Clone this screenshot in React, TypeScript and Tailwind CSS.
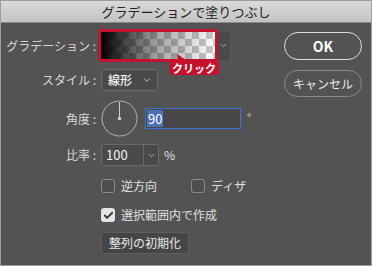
import { Check, ChevronDown } from 'lucide-react';

const font = { fontFamily: '"Noto Sans CJK JP", "Noto Sans", sans-serif' };

function Label({ text }: { text: string }) {
  return (
    <div className="w-[100px] shrink-0 pr-[5px] text-right text-[12px] text-[#d8d8d8]">
      {text}
    </div>
  );
}

function Checkbox({ checked, label }: { checked?: boolean; label: string }) {
  return (
    <div className="flex items-center gap-[6px] leading-[16px]">
      {checked ? (
        <div className="flex h-[14px] w-[14px] items-center justify-center rounded-[3px] bg-[#e4e4e4]">
          <Check size={11} strokeWidth={4} color="#333" />
        </div>
      ) : (
        <div className="h-[14px] w-[14px] rounded-[3px] border border-[#8c8c8c] bg-[#4e4e4e]" />
      )}
      <span className="text-[12px] text-[#e0e0e0]">{label}</span>
    </div>
  );
}

export default function App() {
  return (
    <div
      className="flex h-[266px] w-[372px] flex-col overflow-hidden border border-[#9c9c9c] bg-[#535353]"
      style={font}
    >
      {/* Title bar */}
      <div className="flex h-[22px] shrink-0 items-center justify-center border-b border-[#8a8a8a] bg-linear-to-b from-[#dadada] to-[#c3c3c3] text-[13px] text-[#222]">
        グラデーションで塗りつぶし
      </div>

      <div className="flex flex-1">
        {/* Form */}
        <div className="flex flex-1 flex-col pt-[6px]">
          {/* Gradient */}
          <div className="flex items-center">
            <Label text="グラデーション :" />
            <div className="relative -ml-[3px] flex items-center">
              <div className="h-[33px] w-[120px] rounded-[3px] border-[3px] border-[#c4122f] bg-[repeating-conic-gradient(#c9c9c9_0_25%,#ffffff_0_50%)] bg-[length:14px_14px]">
                <div className="h-full w-full bg-linear-to-r from-black via-[rgba(0,0,0,0.35)] to-transparent" />
              </div>
              <div className="flex h-[28px] w-[11px] items-center justify-center rounded-r-[2px] border border-l-0 border-[#444] bg-[#4a4a4a]">
                <ChevronDown size={9} color="#cfcfcf" strokeWidth={2} />
              </div>
              {/* Callout */}
              <div className="absolute left-[71px] top-[32px] flex h-[14px] w-[50px] items-center justify-center rounded-[4px] bg-[#c4122f] text-[11px] font-bold leading-none text-white">
                クリック
              </div>
              <svg className="absolute left-[78px] top-[25px]" width="14" height="10" viewBox="0 0 14 10">
                <path d="M1 0 L13 8 L3 10 Z" fill="#c4122f" />
              </svg>
            </div>
          </div>

          {/* Style */}
          <div className="mt-[7px] flex items-center">
            <Label text="スタイル :" />
            <div className="flex h-[22px] w-[57px] items-center justify-between rounded-[3px] border border-[#6a6a6a] bg-[#4a4a4a] pl-[6px] pr-[5px]">
              <span className="text-[12px] font-medium text-[#f4f4f4]">線形</span>
              <ChevronDown size={10} color="#d0d0d0" strokeWidth={2} />
            </div>
          </div>

          {/* Angle */}
          <div className="mt-[9px] flex items-center">
            <Label text="角度 :" />
            <svg width="37" height="37" viewBox="0 0 37 37">
              <circle cx="18.5" cy="18.5" r="17.5" fill="none" stroke="#b0b0b0" strokeWidth="1" />
              <line x1="18.5" y1="18.5" x2="18.5" y2="2" stroke="#d0d0d0" strokeWidth="1" />
              <circle cx="18.5" cy="18.5" r="1.8" fill="#d0d0d0" />
            </svg>
            <div className="ml-[7px] flex h-[21px] w-[96px] items-center border border-[#3f6fdc] bg-[#474747] pl-[1px]">
              <span className="bg-[#4d6fb3] px-[1px] text-[13px] leading-[17px] text-white">90</span>
            </div>
            <span className="ml-[6px] -mt-[2px] text-[11px] text-[#e0e0e0]">°</span>
          </div>

          {/* Ratio */}
          <div className="mt-[7px] flex items-center">
            <Label text="比率 :" />
            <div className="flex h-[22px] w-[58px] items-center rounded-[3px] border border-[#6a6a6a] bg-[#4a4a4a]">
              <span className="flex-1 pl-[4px] text-[13px] text-[#f0f0f0]">100</span>
              <div className="flex h-full w-[15px] items-center justify-center border-l border-[#6a6a6a]">
                <ChevronDown size={9} color="#d0d0d0" strokeWidth={2} />
              </div>
            </div>
            <span className="ml-[5px] text-[12px] text-[#e0e0e0]">%</span>
          </div>

          {/* Checkboxes */}
          <div className="mt-[12px] flex items-center pl-[100px]">
            <div className="w-[90px]">
              <Checkbox label="逆方向" />
            </div>
            <Checkbox label="ディザ" />
          </div>
          <div className="mt-[13px] flex items-center pl-[100px]">
            <Checkbox checked label="選択範囲内で作成" />
          </div>

          {/* Reset */}
          <div className="mt-[9px] pl-[100px]">
            <div className="flex h-[22px] w-[88px] items-center justify-center rounded-[3px] border border-[#5e5e5e] bg-[#454545] text-[12px] text-[#e8e8e8]">
              整列の初期化
            </div>
          </div>
        </div>

        {/* Buttons */}
        <div className="flex flex-col gap-[10px] pr-[9px] pt-[9px]">
          <div className="flex h-[28px] w-[78px] items-center justify-center rounded-full border-[1.5px] border-[#dedede] text-[14px] font-semibold text-white">
            OK
          </div>
          <div className="flex h-[27px] w-[78px] items-center justify-center rounded-full border border-[#8a8a8a] text-[12px] text-[#e8e8e8]">
            キャンセル
          </div>
        </div>
      </div>
    </div>
  );
}
